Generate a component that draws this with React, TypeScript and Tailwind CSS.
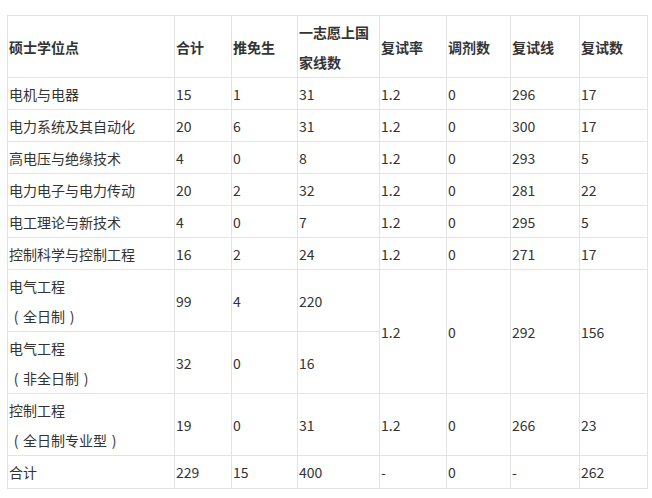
import React from "react";

type Row = { name: string; v: string[] };

const rows: Row[] = [
  { name: "电机与电器", v: ["15", "1", "31", "1.2", "0", "296", "17"] },
  { name: "电力系统及其自动化", v: ["20", "6", "31", "1.2", "0", "300", "17"] },
  { name: "高电压与绝缘技术", v: ["4", "0", "8", "1.2", "0", "293", "5"] },
  { name: "电力电子与电力传动", v: ["20", "2", "32", "1.2", "0", "281", "22"] },
  { name: "电工理论与新技术", v: ["4", "0", "7", "1.2", "0", "295", "5"] },
  { name: "控制科学与控制工程", v: ["16", "2", "24", "1.2", "0", "271", "17"] },
];

const cell = "border border-[#e3e3e3] p-0 pl-[1px] align-middle leading-[30px]";

function Paren({ children }: { children: React.ReactNode }) {
  return <span className="inline-block w-[14px] text-center">{children}</span>;
}

function Sub({ text }: { text: string }) {
  return (
    <>
      <Paren>(</Paren>
      {text}
      <Paren>)</Paren>
    </>
  );
}

export default function App() {
  return (
    <div
      className="w-[652px] h-[498px] bg-white text-[14px] text-[#333] overflow-hidden"
      style={{ fontFamily: '"Noto Sans CJK SC", "Noto Sans", sans-serif' }}
    >
      <table className="ml-[7px] mt-[15px] border-collapse table-fixed w-[640px]">
        <colgroup>
          <col className="w-[167px]" />
          <col className="w-[57px]" />
          <col className="w-[66px]" />
          <col className="w-[82px]" />
          <col className="w-[67px]" />
          <col className="w-[64px]" />
          <col className="w-[69px]" />
          <col className="w-[68px]" />
        </colgroup>
        <tbody>
          <tr className="h-[62px] font-bold">
            <td className={cell}>硕士学位点</td>
            <td className={cell}>合计</td>
            <td className={cell}>推免生</td>
            <td className={cell}>
              一志愿上国
              <br />
              家线数
            </td>
            <td className={cell}>复试率</td>
            <td className={cell}>调剂数</td>
            <td className={cell}>复试线</td>
            <td className={cell}>复试数</td>
          </tr>
          {rows.map((r) => (
            <tr key={r.name} className="h-[32px]">
              <td className={cell}>{r.name}</td>
              {r.v.map((x, i) => (
                <td key={i} className={cell}>
                  {x}
                </td>
              ))}
            </tr>
          ))}
          <tr className="h-[62px]">
            <td className={cell}>
              电气工程
              <br />
              <Sub text="全日制" />
            </td>
            <td className={cell}>99</td>
            <td className={cell}>4</td>
            <td className={cell}>220</td>
            <td className={cell} rowSpan={2}>1.2</td>
            <td className={cell} rowSpan={2}>0</td>
            <td className={cell} rowSpan={2}>292</td>
            <td className={cell} rowSpan={2}>156</td>
          </tr>
          <tr className="h-[62px]">
            <td className={cell}>
              电气工程
              <br />
              <Sub text="非全日制" />
            </td>
            <td className={cell}>32</td>
            <td className={cell}>0</td>
            <td className={cell}>16</td>
          </tr>
          <tr className="h-[62px]">
            <td className={cell}>
              控制工程
              <br />
              <Sub text="全日制专业型" />
            </td>
            <td className={cell}>19</td>
            <td className={cell}>0</td>
            <td className={cell}>31</td>
            <td className={cell}>1.2</td>
            <td className={cell}>0</td>
            <td className={cell}>266</td>
            <td className={cell}>23</td>
          </tr>
          <tr className="h-[33px]">
            <td className={cell}>合计</td>
            <td className={cell}>229</td>
            <td className={cell}>15</td>
            <td className={cell}>400</td>
            <td className={cell}>-</td>
            <td className={cell}>0</td>
            <td className={cell}>-</td>
            <td className={cell}>262</td>
          </tr>
        </tbody>
      </table>
    </div>
  );
}
